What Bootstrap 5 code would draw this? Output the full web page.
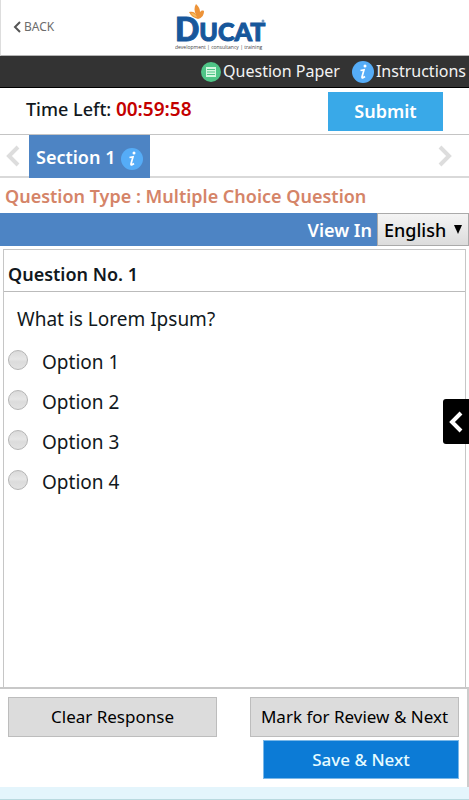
<!DOCTYPE html>
<html lang="en">
<head>
<meta charset="utf-8">
<meta name="viewport" content="width=device-width, initial-scale=1">
<title>Ducat Online Test</title>
<link href="https://cdn.jsdelivr.net/npm/bootstrap@5.3.0/dist/css/bootstrap.min.css" rel="stylesheet">
<style>
  body { font-family: "Noto Sans", "Open Sans", sans-serif; font-size: 18px; line-height: 24px; color: #111820; background: #fff; }
  button, select, input { font-family: inherit; }
  a { text-decoration: none; }
  svg { display: block; flex: none; }
  .topbar { display: grid; grid-template-columns: 1fr auto 1fr; height: 56px; border-bottom: 1px solid #b5b5b5; border-left: 1px solid #ddd; }
  .back-link { font-size: 12px; line-height: 16px; color: #6c6c6c; padding-left: 12px; padding-bottom: 2px; gap: 2px; }
  .tools { height: 32px; background: #333; border-bottom: 1px solid #000; font-size: 16px; padding: 0 3px 2px 0; gap: 12px; }
  .tools a { color: #f3f3f3; gap: 2px; }
  .timer-row { height: 47px; border-bottom: 1px solid #c4c4c4; padding: 0 26px; }
  .timer { font-weight: 500; padding-bottom: 5px; }
  .timer span { color: #c40000; font-weight: 600; font-size: 19px; }
  .btn-flat { border-radius: 0; border: 1px solid transparent; padding: 0; line-height: 24px; }
  .btn-submit { width: 115px; height: 39px; background: #39a9e8; color: #fff; font-size: 18px; font-weight: 600; }
  .tabs-row { height: 43px; border-bottom: 2px solid #d9d9d9; padding: 0 17px 0 6px; }
  .section-tab { height: 43px; width: 121px; margin-left: 9px; background: #4d84c4; color: #fff; font-size: 18px; font-weight: 600; border: 0; padding: 0 7px; }
  .plain-btn { border: 0; background: none; padding: 0; }
  .qtype { height: 35px; padding: 6px 5px; color: #d58468; font-weight: 600; }
  .view-bar { height: 33px; background: #4d84c4; color: #fff; font-weight: 600; gap: 5px; }
  .lang { width: 92px; height: 33px; appearance: none; border: 1px solid #aaa; border-radius: 0; background: linear-gradient(#f4f4f4, #dcdcdc); color: #000; font-size: 18px; font-weight: 500; padding: 0 6px; }
  .lang-wrap { position: relative; }
  .lang-arrow { position: absolute; right: 7px; top: 12px; pointer-events: none; }
  .question-box { margin: 3px 3px 0; border: 1px solid #c6c6c6; border-bottom: 0; min-height: 437px; flex: 1; }
  .qno { height: 42px; padding: 12px 4px 4px; font-weight: 600; border-bottom: 1px solid #bbb; }
  .qtext { padding: 15px 13px 0; font-size: 19px; }
  .options { padding: 9px 4px 0; font-size: 19px; }
  .option { height: 40px; gap: 14px; }
  .option input { appearance: none; width: 20px; height: 20px; margin: 0; border: 1px solid #b5b5b5; border-radius: 50%; background: linear-gradient(#dadada, #e6e6e6 45%, #dcdcdc 60%, #e2e2e2); }
  .option input:checked { box-shadow: inset 0 0 0 5px #ddd, inset 0 0 0 10px #333; }
  .option label { padding-top: 4px; }
  .drawer { position: fixed; right: 0; top: 399px; width: 26px; height: 45px; background: #000; border: 0; border-radius: 3px 0 0 3px; padding: 0 0 0 6px; }
  .actions { border-top: 2px solid #c8c8c8; border-right: 2px solid #ccc; padding: 8px; gap: 3px; }
  .btn-grey { height: 40px; background: #dcdcdc; border-color: #bdbdbd; color: #000; font-size: 17px; width: 209px; }
  .btn-save { width: 196px; height: 39px; background: #0c7bd6; border-color: #7bb8e8; color: #e6fbff; font-size: 17px; font-weight: 500; }
  .foot-strip { height: 13px; background: #e4f5fc; border-bottom: 1px solid #b9d9df; }
</style>
</head>
<body class="min-vh-100 d-flex flex-column">
<header class="topbar">
  <a href="#" class="back-link d-flex align-items-center align-self-center">
    <svg width="9" height="12" viewBox="0 0 9 12" fill="none" stroke="#555" stroke-width="2"><path d="M7 1 2 6l5 5"/></svg>BACK</a>
  <svg width="120" height="54" viewBox="0 0 120 54" role="img" aria-label="Ducat">
    <text x="0" y="41" fill="#17579b" stroke="#17579b" font-family="Lato, sans-serif" font-weight="900" font-size="32">D<tspan font-size="25">UCAT</tspan></text>
    <path fill="#ed9338" d="M14 12c4-1 6 0 7 3-2-4-2-8 0-11 3 3 4 5 4 8 1-1 2-2 4-1 0 4-2 7-6 8-4-1-7-3-9-7z"/>
    <path fill="#f6bd5d" d="M16 13c3 0 5 2 6 4-3 0-5-2-6-4z"/>
    <circle cx="88" cy="21" r="1" fill="none" stroke="#17579b" stroke-width=".7"/>
    <text x="0" y="49" font-family="Open Sans, sans-serif" font-size="5" fill="#444">development | consultancy | training</text>
  </svg>
</header>

<nav class="tools d-flex align-items-center justify-content-end">
  <a href="#" class="d-flex align-items-center">
    <svg width="20" height="22" viewBox="0 0 20 22"><circle cx="10" cy="12" r="10" fill="#4fc587"/><path fill="#d4f8e1" d="M5 7h10v10H5z"/><path d="M6 9.500h8M6 12h8M6 14.500h8" stroke="#4fc587"/></svg>Question Paper</a>
  <a href="#" class="d-flex align-items-center">
    <svg width="22" height="24" viewBox="0 0 22 24"><circle cx="11" cy="13" r="11" fill="#55acf7"/><circle cx="13" cy="7" r="1.500" fill="#fff"/><path d="M8.500 11.500 12 10.800 10 18q-.2 2 3-.5" fill="none" stroke="#fff" stroke-width="1.700"/></svg>Instructions</a>
</nav>

<section class="timer-row d-flex align-items-center justify-content-between">
  <div class="timer">Time Left: <span>00:59:58</span></div>
  <button type="button" class="btn btn-flat btn-submit">Submit</button>
</section>

<section class="tabs-row d-flex align-items-center">
  <button type="button" class="plain-btn" aria-label="Previous section"><svg width="14" height="22" viewBox="0 0 14 22" fill="none" stroke="#ddd" stroke-width="4"><path d="m12 2-9 9 9 9"/></svg></button>
  <button type="button" class="section-tab d-flex align-items-center justify-content-between align-self-start">Section 1
    <svg width="22" height="26" viewBox="0 0 22 26"><circle cx="11" cy="15" r="11" fill="#55acf7"/><circle cx="13" cy="9" r="1.500" fill="#fff"/><path d="M8.500 13.500 12 12.800 10 20q-.2 2 3-.5" fill="none" stroke="#fff" stroke-width="1.700"/></svg></button>
  <button type="button" class="plain-btn ms-auto" aria-label="Next section"><svg width="14" height="22" viewBox="0 0 14 22" fill="none" stroke="#ddd" stroke-width="4"><path d="m2 2 9 9-9 9"/></svg></button>
</section>

<div class="qtype">Question Type : Multiple Choice Question</div>

<div class="view-bar d-flex align-items-center justify-content-end">
  <label for="lang">View In</label>
  <div class="lang-wrap">
    <select id="lang" class="lang d-block"><option>English</option></select>
    <svg class="lang-arrow" width="8" height="9" viewBox="0 0 8 9"><path d="M0 0h8L4 9z"/></svg>
  </div>
</div>

<main class="question-box">
  <div class="qno">Question No. 1</div>
  <div class="qtext">What is Lorem Ipsum?</div>
  <div class="options">
    <div class="option d-flex align-items-center"><input type="radio" name="answer" id="o1"><label for="o1">Option 1</label></div>
    <div class="option d-flex align-items-center"><input type="radio" name="answer" id="o2"><label for="o2">Option 2</label></div>
    <div class="option d-flex align-items-center"><input type="radio" name="answer" id="o3"><label for="o3">Option 3</label></div>
    <div class="option d-flex align-items-center"><input type="radio" name="answer" id="o4"><label for="o4">Option 4</label></div>
  </div>
</main>

<button type="button" class="drawer" aria-label="Open question palette"><svg width="14" height="22" viewBox="0 0 14 22" fill="none" stroke="#fff" stroke-width="4"><path d="m12 2-9 9 9 9"/></svg></button>

<footer>
  <div class="actions d-flex flex-wrap justify-content-between">
    <button type="button" class="btn btn-flat btn-grey">Clear Response</button>
    <button type="button" class="btn btn-flat btn-grey">Mark for Review &amp; Next</button>
    <button type="button" class="btn btn-flat btn-save ms-auto">Save &amp; Next</button>
  </div>
  <div class="foot-strip"></div>
</footer>
<script src="https://cdn.jsdelivr.net/npm/bootstrap@5.3.0/dist/js/bootstrap.bundle.min.js"></script>
</body>
</html>
